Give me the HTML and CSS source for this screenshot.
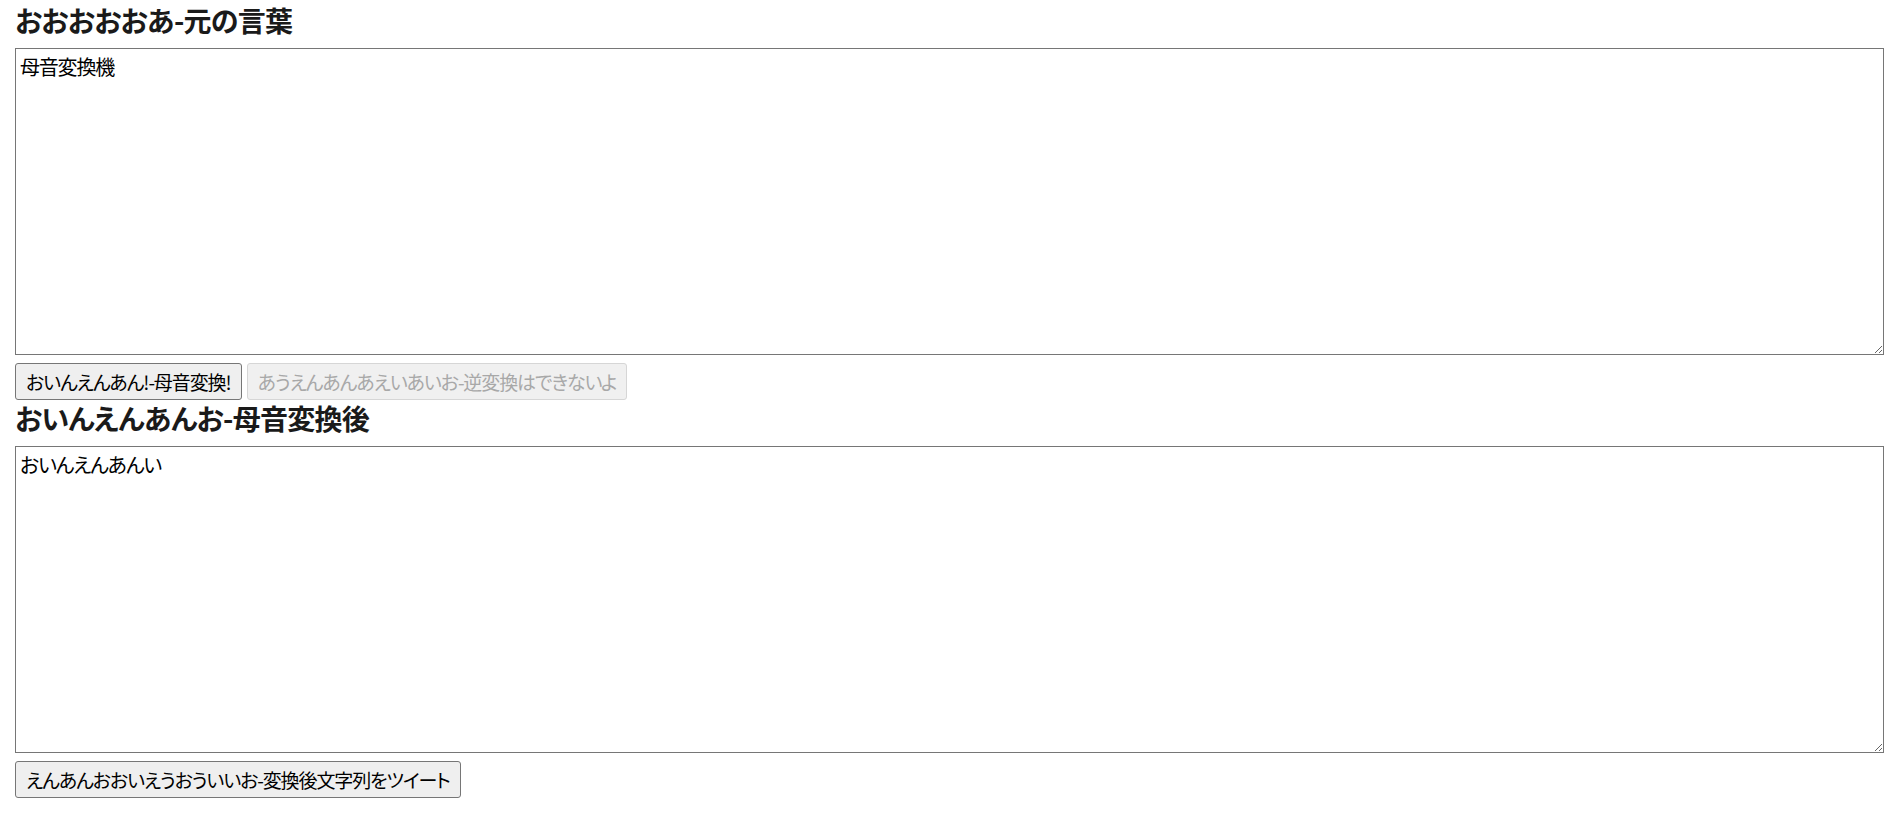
FILE: index.html
```html
<!DOCTYPE html>
<html lang="ja">
<head>
<meta charset="utf-8">
<title>母音変換機</title>
<link rel="stylesheet" href="styles.css">
</head>
<body>
<main class="page">
  <h3 class="title title-first">おおおおおあ-元の言葉</h3>
  <textarea class="box">母音変換機</textarea>
  <div class="actions">
    <button class="btn" type="button">おいんえんあん!-母音変換!</button>
    <button class="btn" type="button" disabled>あうえんあんあえいあいお-逆変換はできないよ</button>
  </div>
  <h3 class="title">おいんえんあんお-母音変換後</h3>
  <textarea class="box">おいんえんあんい</textarea>
  <div class="actions">
    <button class="btn" type="button">えんあんおおいえうおういいお-変換後文字列をツイート</button>
  </div>
</main>
</body>
</html>
```
FILE: styles.css
```css
html, body {
  margin: 0;
  padding: 0;
  background: #fff;
}
.page {
  padding: 0 12px 0 15px;
  font-family: "Noto Sans CJK JP", "Noto Sans", sans-serif;
  font-feature-settings: "palt";
  color: #000;
}
.title {
  margin: 4px 0 14px;
  font-size: 28px;
  line-height: 28px;
  font-weight: 700;
  letter-spacing: -0.7px;
  color: #1a1a1a;
}
.title-first {
  margin-top: 6px;
}
.box {
  display: block;
  box-sizing: border-box;
  width: 1869px;
  height: 307px;
  margin: 0;
  padding: 3px 4px;
  border: 1px solid #767676;
  font-family: "Noto Sans CJK JP", "Noto Sans", sans-serif;
  font-feature-settings: "palt";
  font-size: 20px;
  line-height: 30px;
  letter-spacing: -1.2px;
  color: #000;
  resize: both;
}
.actions {
  display: flex;
  gap: 5px;
  margin-top: 8px;
}
.btn {
  box-sizing: border-box;
  height: 37px;
  margin: 0;
  padding: 0 10px;
  border: 1px solid #767676;
  border-radius: 3px;
  background: #efefef;
  font-family: "Noto Sans CJK JP", "Noto Sans", sans-serif;
  font-feature-settings: "palt";
  font-size: 19px;
  line-height: 33px;
  letter-spacing: -1.1px;
  color: #000;
}
.btn:disabled {
  border-color: #d6d6d6;
  background: #f0f0f0;
  color: #a8a8a8;
}
```
